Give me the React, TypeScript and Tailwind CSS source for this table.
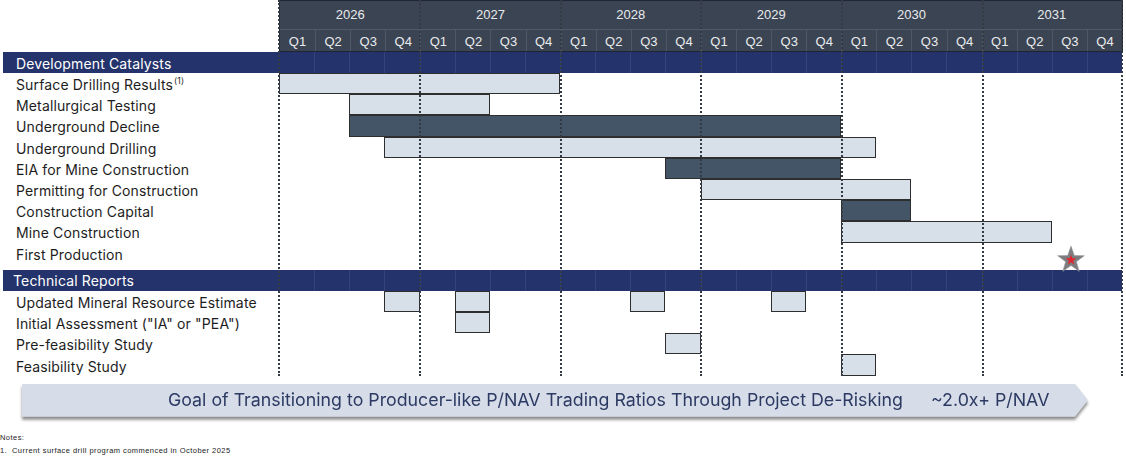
import type { ReactNode } from "react";

type Bar = { cls: string; dark?: boolean };
type Row = { label: ReactNode; bars: Bar[]; star?: boolean };

const years = ["2026", "2027", "2028", "2029", "2030", "2031"];
const quarters = years.flatMap(() => ["Q1", "Q2", "Q3", "Q4"]);

const catalysts: Row[] = [
  {
    label: (
      <>
        Surface Drilling Results
        <span className="relative -top-[3px] ml-[1px] text-[8.5px]">(1)</span>
      </>
    ),
    bars: [{ cls: "col-start-1 col-end-9" }],
  },
  { label: "Metallurgical Testing", bars: [{ cls: "col-start-3 col-end-7" }] },
  { label: "Underground Decline", bars: [{ cls: "col-start-3 col-end-17", dark: true }] },
  { label: "Underground Drilling", bars: [{ cls: "col-start-4 col-end-18" }] },
  { label: "EIA for Mine Construction", bars: [{ cls: "col-start-12 col-end-17", dark: true }] },
  { label: "Permitting for Construction", bars: [{ cls: "col-start-13 col-end-19" }] },
  { label: "Construction Capital", bars: [{ cls: "col-start-17 col-end-19", dark: true }] },
  { label: "Mine Construction", bars: [{ cls: "col-start-17 col-end-23" }] },
  { label: "First Production", bars: [], star: true },
];

const reports: Row[] = [
  {
    label: "Updated Mineral Resource Estimate",
    bars: [{ cls: "col-start-4" }, { cls: "col-start-6" }, { cls: "col-start-11" }, { cls: "col-start-15" }],
  },
  { label: 'Initial Assessment ("IA" or "PEA")', bars: [{ cls: "col-start-6" }] },
  { label: "Pre-feasibility Study", bars: [{ cls: "col-start-12" }] },
  { label: "Feasibility Study", bars: [{ cls: "col-start-17" }] },
];

function Star() {
  return (
    <svg width="30" height="29" viewBox="0 0 30 29" className="ml-[3px]">
      <polygon
        points="15,1 18.29,10.47 28.31,10.67 20.33,16.73 23.23,26.33 15,20.6 6.77,26.33 9.67,16.73 1.69,10.67 11.71,10.47"
        fill="#7d7d7f"
        stroke="#9a9a9c"
        strokeWidth="0.6"
      />
      <polygon
        transform="translate(15 15) scale(0.4) translate(-15 -15)"
        points="15,1 18.29,10.47 28.31,10.67 20.33,16.73 23.23,26.33 15,20.6 6.77,26.33 9.67,16.73 1.69,10.67 11.71,10.47"
        fill="#e3262d"
      />
    </svg>
  );
}

function Band({ title, h, pl }: { title: string; h: string; pl: string }) {
  return (
    <div className={`flex ml-[3px] w-[1119px] bg-[#24336b] ${h}`}>
      <div className={`w-[276px] flex items-center pt-[1px] text-[14px] tracking-[0.01em] text-white ${pl}`}>{title}</div>
      <div className="w-[843px] grid grid-cols-24">
        {quarters.map((q, i) => (
          <div key={i} className={i === 0 ? "" : "border-l border-[#34437a]"} />
        ))}
      </div>
    </div>
  );
}

function ChartRow({ row, h }: { row: Row; h: string }) {
  return (
    <div className={`flex ${h}`}>
      <div className="w-[279px] pl-[16px] pt-[2px] flex items-center text-[14px] tracking-[0.01em] text-[#1d1d1d] whitespace-nowrap">
        {row.label}
      </div>
      <div className="w-[843px] grid grid-cols-24">
        {row.bars.map((b, i) => (
          <div
            key={i}
            className={`${b.cls} row-start-1 border-[1.5px] border-[#2e2e2e] ${b.dark ? "bg-[#435567]" : "bg-[#d7dfe9]"}`}
          />
        ))}
        {row.star && (
          <div className="col-start-23 row-start-1 flex items-center justify-center pt-[2px]">
            <Star />
          </div>
        )}
      </div>
    </div>
  );
}

export default function App() {
  return (
    <div className="relative w-[1126px] h-[456px] overflow-hidden bg-white font-['Inter',sans-serif]">
      {/* TIMELINE HEADER */}
      <div className="flex h-[52px]">
        <div className="w-[279px]" />
        <div className="w-[844px] flex flex-col bg-[#3b4452] border border-[#1f2631] font-['Liberation_Sans',Arial,sans-serif] text-[13px] text-[#e9ebee]">
          <div className="h-[30px] grid grid-cols-6 border-b border-[#505a68]">
            {years.map((y) => (
              <div key={y} className="flex items-center justify-center">
                {y}
              </div>
            ))}
          </div>
          <div className="flex-1 grid grid-cols-24">
            {quarters.map((q, i) => (
              <div
                key={i}
                className={`flex items-center justify-center pt-[2px] ${i === 0 ? "" : "border-l border-[#4d5765]"}`}
              >
                {q}
              </div>
            ))}
          </div>
        </div>
      </div>

      {/* DEVELOPMENT CATALYSTS */}
      <Band title="Development Catalysts" h="h-[21px]" pl="pl-[13px]" />
      {catalysts.map((r, i) => (
        <ChartRow key={i} row={r} h="h-[21.2px]" />
      ))}

      {/* TECHNICAL REPORTS */}
      <div className="mt-[6px]">
        <Band title="Technical Reports" h="h-[21px]" pl="pl-[10px]" />
      </div>
      {reports.map((r, i) => (
        <ChartRow key={i} row={r} h="h-[21.25px]" />
      ))}

      {/* GOAL ARROW */}
      <div className="mt-[8px] ml-[22px] w-[1066px] drop-shadow-[0_3px_1.5px_rgba(0,0,0,0.45)]">
        <div className="h-[33px] flex items-center bg-[#d6dde8] text-[#2c3a63] text-[17.8px] [clip-path:polygon(0_0,calc(100%-13px)_0,100%_50%,calc(100%-13px)_100%,0_100%)]">
          <span className="pl-[146px]">Goal of Transitioning to Producer-like P/NAV Trading Ratios Through Project De-Risking</span>
          <span className="ml-[28px]">~2.0x+ P/NAV</span>
        </div>
      </div>

      {/* NOTES */}
      <div className="mt-[16px] text-[7.5px] leading-[9px] tracking-[0.06em] text-[#222] font-['Liberation_Sans',Arial,sans-serif]">
        <p>Notes:</p>
        <p className="mt-[4px] flex">
          <span className="w-[12px]">1.</span>
          <span>Current surface drill program commenced in October 2025</span>
        </p>
      </div>

      {/* YEAR DIVIDERS */}
      <div className="absolute top-0 left-[278px] w-[845px] h-[376px] grid grid-cols-6 pointer-events-none">
        {years.map((y, i) => (
          <div
            key={y}
            className={`border-l-2 border-dotted border-[#333a44] ${i === years.length - 1 ? "border-r-2" : ""}`}
          />
        ))}
      </div>
    </div>
  );
}
